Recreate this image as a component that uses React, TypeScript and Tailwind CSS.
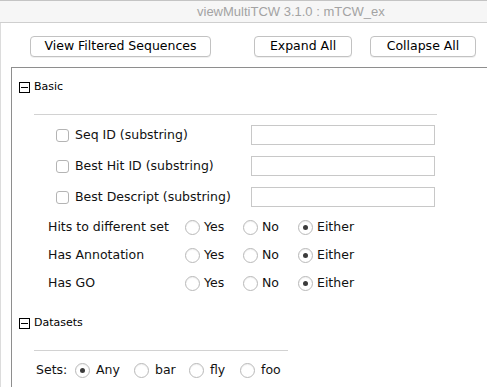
import React from "react";

const font = { fontFamily: '"DejaVu Sans", Verdana, sans-serif' };

function Radio({ checked }: { checked?: boolean }) {
  return (
    <span className="flex h-[15px] w-[15px] shrink-0 items-center justify-center rounded-full border border-[#b9b9b9] bg-white shadow-[inset_0_1px_1px_rgba(0,0,0,0.06)]">
      {checked && <span className="h-[5px] w-[5px] rounded-full bg-[#3c3c3c]" />}
    </span>
  );
}

function Check() {
  return <span className="h-[13px] w-[13px] shrink-0 rounded-[3px] border border-[#b4b4b4] bg-white" />;
}

function Toggle({ label }: { label: string }) {
  return (
    <div className="flex h-[20px] items-center pl-[7px]">
      <span className="flex h-[11px] w-[11px] items-center justify-center border border-black">
        <span className="h-px w-[7px] bg-black" />
      </span>
      <span className="ml-[4px] text-[11px] text-black">{label}</span>
    </div>
  );
}

function TextRow({ label }: { label: string }) {
  return (
    <div className="flex h-[20px] items-center pl-[44px]">
      <div className="flex w-[195px] items-center gap-[6px]">
        <Check />
        <span className="text-[12.5px] text-[#111]">{label}</span>
      </div>
      <div className="h-[20px] w-[184px] border border-[#c8c8c8] bg-white" />
    </div>
  );
}

function YesNoRow({ label }: { label: string }) {
  const opts = [
    { t: "Yes", w: "w-[58px]" },
    { t: "No", w: "w-[55px]" },
    { t: "Either", w: "w-[70px]", on: true },
  ];
  return (
    <div className="flex h-[20px] items-center pl-[36px] text-[12.5px] text-[#111]">
      <span className="w-[137px]">{label}</span>
      {opts.map((o) => (
        <div key={o.t} className={`flex items-center gap-[4px] ${o.w}`}>
          <Radio checked={o.on} />
          <span>{o.t}</span>
        </div>
      ))}
    </div>
  );
}

export default function App() {
  const sets = [
    { t: "Any", w: "w-[59px]", on: true },
    { t: "bar", w: "w-[55px]" },
    { t: "fly", w: "w-[51px]" },
    { t: "foo", w: "w-[50px]" },
  ];

  return (
    <div className="h-[387px] w-[487px] overflow-hidden bg-white" style={font}>
      {/* title bar */}
      <div className="flex h-[23px] items-center border-t border-b border-t-[#c4c4c4] border-b-[#cfcfcf] bg-[#f6f6f6] pl-[197px]">
        <span className="text-[13px] text-[#a3a3a3]" style={{ fontFamily: '"Liberation Sans", Arial, sans-serif' }}>
          viewMultiTCW 3.1.0 : mTCW_ex
        </span>
      </div>

      <div className="h-[364px] border-l border-[#dcdcdc]">
        {/* buttons */}
        <div className="flex pt-[13px] text-[12.5px] text-black">
          <button className="ml-[29px] h-[21px] w-[181px] rounded-[4px] border border-[#c2c2c2] bg-white shadow-[0_1px_0_rgba(0,0,0,0.06)]">
            View Filtered Sequences
          </button>
          <button className="ml-[43px] h-[21px] w-[98px] rounded-[4px] border border-[#c2c2c2] bg-white shadow-[0_1px_0_rgba(0,0,0,0.06)]">
            Expand All
          </button>
          <button className="ml-[18px] h-[21px] w-[106px] rounded-[4px] border border-[#c2c2c2] bg-white shadow-[0_1px_0_rgba(0,0,0,0.06)]">
            Collapse All
          </button>
        </div>

        {/* filter panel */}
        <div className="ml-[10px] mt-[10px] h-[400px] border-l border-t border-[#8e8e8e] pt-[9px]">
          <Toggle label="Basic" />
          <div className="ml-[22px] mt-[17px] h-px w-[403px] bg-[#d2d2d2]" />
          <div className="mt-[10px] flex flex-col gap-[11px]">
            <TextRow label="Seq ID (substring)" />
            <TextRow label="Best Hit ID (substring)" />
            <TextRow label="Best Descript (substring)" />
          </div>
          <div className="mt-[10px] flex flex-col gap-[8px]">
            <YesNoRow label="Hits to different set" />
            <YesNoRow label="Has Annotation" />
            <YesNoRow label="Has GO" />
          </div>

          <div className="mt-[20px]">
            <Toggle label="Datasets" />
          </div>
          <div className="ml-[22px] mt-[17px] h-px w-[254px] bg-[#d2d2d2]" />
          <div className="mt-[9px] flex h-[20px] items-center pl-[24px] text-[12.5px] text-[#111]">
            <span className="w-[39px]">Sets:</span>
            {sets.map((s) => (
              <div key={s.t} className={`flex items-center gap-[6px] ${s.w}`}>
                <Radio checked={s.on} />
                <span>{s.t}</span>
              </div>
            ))}
          </div>
        </div>
      </div>
    </div>
  );
}
